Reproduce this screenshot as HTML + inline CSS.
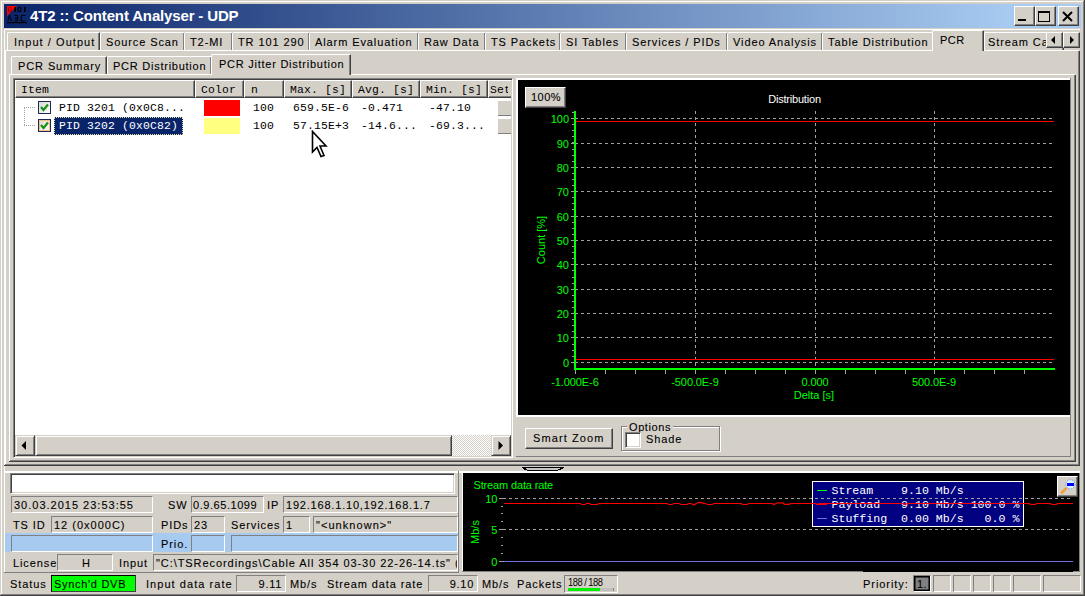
<!DOCTYPE html>
<html><head><meta charset="utf-8">
<style>
*{box-sizing:border-box;margin:0;padding:0}
html,body{width:1085px;height:596px;overflow:hidden;background:#D4D0C8}
body{position:relative;font-family:"Liberation Sans",sans-serif;font-size:11px;color:#000}
.a{position:absolute}
.t{position:absolute;white-space:nowrap;font-size:11px;letter-spacing:0.9px;line-height:13px;-webkit-text-stroke:0.1px #000}
.m{position:absolute;white-space:nowrap;font-family:"Liberation Mono",monospace;font-size:11.4px;line-height:13px;letter-spacing:0.17px}
.c{position:absolute;white-space:nowrap;font-size:11px;line-height:13px;color:#00FF00}
.hl{position:absolute;background:#fff}
.dk{position:absolute;background:#404040}
.sh{position:absolute;background:#808080}
/* raised button */
.sbtn{position:absolute;background:#D4D0C8;border-top:1px solid #D4D0C8;border-left:1px solid #D4D0C8;border-right:1px solid #404040;border-bottom:1px solid #404040;box-shadow:inset 1px 1px 0 #fff, inset -1px -1px 0 #808080}
.btn{position:absolute;background:#D4D0C8;border-top:1px solid #fff;border-left:1px solid #fff;border-right:1px solid #404040;border-bottom:1px solid #404040;box-shadow:inset -1px -1px 0 #808080}
/* thin sunken field */
.fld{position:absolute;border-top:1px solid #808080;border-left:1px solid #808080;border-right:1px solid #fff;border-bottom:1px solid #fff}
/* tabs */
.tab{position:absolute;background:#D4D0C8;border-top:1px solid #fff;border-left:1px solid #fff;border-right:1px solid #404040;box-shadow:inset -1px 0 0 #808080;border-top-left-radius:2px;border-top-right-radius:1px}
</style></head><body>

<!-- window frame -->
<div class="hl" style="left:1px;top:1px;width:1082px;height:1px"></div>
<div class="hl" style="left:1px;top:1px;width:1px;height:593px"></div>
<div class="sh" style="left:1083px;top:1px;width:1px;height:594px"></div>
<div class="sh" style="left:1px;top:594px;width:1083px;height:1px"></div>
<div class="dk" style="left:1084px;top:0;width:1px;height:596px"></div>
<div class="dk" style="left:0;top:595px;width:1085px;height:1px"></div>

<!-- title bar -->
<div class="a" style="left:4px;top:4px;width:1077px;height:24px;background:linear-gradient(to right,#0A246A 0px,#A6CAF0 1005px)"></div>
<svg class="a" style="left:7px;top:6px" width="21" height="18" viewBox="0 0 21 18">
  <polygon points="0,0 10,0 0,10" fill="#f00"/>
  <rect x="1.5" y="1.5" width="3" height="4" rx="1.3" fill="none" stroke="#800" stroke-width="1"/>
  <rect x="7.5" y="1" width="1.5" height="5" fill="#000"/>
  <rect x="11" y="1.5" width="3" height="4" rx="1.3" fill="none" stroke="#000" stroke-width="1.1"/>
  <rect x="17" y="1" width="1.6" height="5" fill="#000"/>
  <path d="M0.8,15 L2.5,9.5 L4.5,15 M7.5,9.5 L10.5,9.5 L11,12 L8,12.3 L11,13 L10.5,15 L7.5,15 M18.5,9.5 L14.5,9.5 L14,15 L18.5,15" stroke="#000" stroke-width="1" fill="none"/>
  <rect x="0" y="16" width="20" height="1.2" fill="#000"/>
</svg>
<div class="a" style="left:30px;top:7px;font-weight:bold;font-size:15px;line-height:17px;color:#fff;letter-spacing:-0.15px;white-space:nowrap">4T2 :: Content Analyser - UDP</div>
<!-- caption buttons -->
<div class="btn" style="left:1014px;top:6px;width:21px;height:20px"><div class="a" style="left:3px;top:12px;width:8px;height:2px;background:#000"></div></div>
<div class="btn" style="left:1035px;top:6px;width:21px;height:20px"><div class="a" style="left:2px;top:4px;width:12px;height:11px;border:1px solid #000;border-top-width:2px"></div></div>
<div class="btn" style="left:1058px;top:6px;width:21px;height:20px">
<svg class="a" style="left:2px;top:3px" width="14" height="13"><path d="M2,2 L11,11 M11,2 L2,11" stroke="#000" stroke-width="2"/></svg></div>

<!-- outer panel lines -->
<div class="hl" style="left:4px;top:29px;width:1076px;height:1px"></div>
<div class="hl" style="left:4px;top:29px;width:1px;height:442px"></div>

<!-- top tabs -->
<div class="tab" style="left:7px;top:32px;width:93px;height:19px"><span class="t" style="left:6px;top:3px;letter-spacing:1.05px">Input / Output</span></div>
<div class="tab" style="left:100px;top:32px;width:85px;height:19px"><span class="t" style="left:5px;top:3px">Source Scan</span></div>
<div class="tab" style="left:184px;top:32px;width:49px;height:19px"><span class="t" style="left:5px;top:3px">T2-MI</span></div>
<div class="tab" style="left:232px;top:32px;width:78px;height:19px"><span class="t" style="left:5px;top:3px">TR 101 290</span></div>
<div class="tab" style="left:309px;top:32px;width:110px;height:19px"><span class="t" style="left:5px;top:3px">Alarm Evaluation</span></div>
<div class="tab" style="left:418px;top:32px;width:68px;height:19px"><span class="t" style="left:5px;top:3px">Raw Data</span></div>
<div class="tab" style="left:485px;top:32px;width:76px;height:19px"><span class="t" style="left:5px;top:3px">TS Packets</span></div>
<div class="tab" style="left:560px;top:32px;width:67px;height:19px"><span class="t" style="left:5px;top:3px">SI Tables</span></div>
<div class="tab" style="left:626px;top:32px;width:102px;height:19px"><span class="t" style="left:5px;top:3px">Services / PIDs</span></div>
<div class="tab" style="left:727px;top:32px;width:96px;height:19px"><span class="t" style="left:5px;top:3px">Video Analysis</span></div>
<div class="tab" style="left:822px;top:32px;width:111px;height:19px"><span class="t" style="left:5px;top:3px">Table Distribution</span></div>
<div class="tab" style="left:984px;top:32px;width:80px;height:19px;overflow:hidden"><span class="t" style="left:3px;top:3px">Stream Capture</span></div>
<!-- page top line -->
<div class="hl" style="left:4px;top:50px;width:1075px;height:1px"></div>
<div class="hl" style="left:5px;top:50px;width:1px;height:415px"></div>
<div class="a" style="left:930px;top:33px;width:2px;height:17px;background:#D4D0C8"></div>
<div class="tab" style="left:932px;top:30px;width:52px;height:21px;border-bottom:none"><span class="t" style="left:7px;top:3px;letter-spacing:0.5px">PCR</span></div>
<!-- tab scroll arrows -->
<div class="btn" style="left:1046px;top:32px;width:17px;height:16px"><svg class="a" style="left:3px;top:3px" width="6" height="9"><polygon points="5,0 5,8 1,4" fill="#000"/></svg></div>
<div class="btn" style="left:1063px;top:32px;width:17px;height:16px"><svg class="a" style="left:5px;top:3px" width="6" height="9"><polygon points="1,0 1,8 5,4" fill="#000"/></svg></div>

<!-- top page right/bottom -->
<div class="sh" style="left:1078px;top:51px;width:1px;height:414px"></div>
<div class="dk" style="left:1079px;top:51px;width:1px;height:415px"></div>
<div class="sh" style="left:5px;top:464px;width:1074px;height:1px"></div>
<div class="dk" style="left:4px;top:465px;width:1076px;height:1px"></div>

<!-- sub tabs -->
<div class="tab" style="left:11px;top:56px;width:96px;height:19px"><span class="t" style="left:6px;top:3px">PCR Summary</span></div>
<div class="tab" style="left:107px;top:56px;width:105px;height:19px"><span class="t" style="left:5px;top:3px;letter-spacing:0.75px">PCR Distribution</span></div>
<div class="hl" style="left:9px;top:74px;width:1066px;height:1px"></div>
<div class="hl" style="left:9px;top:74px;width:1px;height:387px"></div>
<div class="tab" style="left:211px;top:54px;width:140px;height:21px;border-bottom:none"><span class="t" style="left:7px;top:3px;letter-spacing:0.75px">PCR Jitter Distribution</span></div>
<!-- sub page right/bottom -->
<div class="sh" style="left:1074px;top:75px;width:1px;height:385px"></div>
<div class="dk" style="left:1075px;top:75px;width:1px;height:386px"></div>
<div class="sh" style="left:10px;top:460px;width:1065px;height:1px"></div>
<div class="dk" style="left:9px;top:461px;width:1067px;height:1px"></div>

<!-- listview -->
<div class="a" style="left:13px;top:78px;width:500px;height:380px;background:#fff;border-top:1px solid #808080;border-left:1px solid #808080;border-right:1px solid #fff;border-bottom:1px solid #fff;box-shadow:inset 1px 1px 0 #404040, inset -1px -1px 0 #D4D0C8"></div>
<!-- header -->
<div class="a" style="left:15px;top:80px;width:496px;height:18px;overflow:hidden">
 <div class="btn" style="left:0;top:0;width:180px;height:18px"><span class="m" style="left:5px;top:3px">Item</span></div>
 <div class="btn" style="left:180px;top:0;width:49px;height:18px"><span class="m" style="left:5px;top:3px">Color</span></div>
 <div class="btn" style="left:229px;top:0;width:40px;height:18px"><span class="m" style="left:6px;top:3px">n</span></div>
 <div class="btn" style="left:269px;top:0;width:68px;height:18px"><span class="m" style="left:5px;top:3px">Max. [s]</span></div>
 <div class="btn" style="left:337px;top:0;width:68px;height:18px"><span class="m" style="left:5px;top:3px">Avg. [s]</span></div>
 <div class="btn" style="left:405px;top:0;width:68px;height:18px"><span class="m" style="left:5px;top:3px">Min. [s]</span></div>
 <div class="btn" style="left:473px;top:0;width:60px;height:18px"><div class="a" style="left:0;top:0;width:19px;height:16px;overflow:hidden"><span class="m" style="left:1px;top:3px">Set</span></div></div>
</div>
<!-- tree lines -->
<div class="a" style="left:24px;top:107px;width:1px;height:18px;border-left:1px dotted #A0A0A0"></div>
<div class="a" style="left:24px;top:107px;width:11px;height:1px;border-top:1px dotted #A0A0A0"></div>
<div class="a" style="left:24px;top:125px;width:11px;height:1px;border-top:1px dotted #A0A0A0"></div>
<!-- checkboxes -->
<div class="a" style="left:38px;top:101px;width:13px;height:13px;border:1px solid #1c2a5a;background:linear-gradient(135deg,#D8D8D0,#fff)"><svg class="a" style="left:1px;top:1px" width="9" height="9"><path d="M1,4 L3.5,7 L8,1.5" stroke="#189018" stroke-width="2.2" fill="none"/></svg></div>
<div class="a" style="left:38px;top:119px;width:13px;height:13px;border:1px solid #1c2a5a;background:linear-gradient(135deg,#D8D8D0,#fff);box-shadow:inset 0 0 0 1px #F8C080"><svg class="a" style="left:1px;top:1px" width="9" height="9"><path d="M1,4 L3.5,7 L8,1.5" stroke="#189018" stroke-width="2.2" fill="none"/></svg></div>
<!-- row 1 -->
<span class="m" style="left:59px;top:102px">PID 3201 (0x0C8...</span>
<div class="a" style="left:204px;top:100px;width:36px;height:16px;background:#FF0000"></div>
<span class="m" style="left:253px;top:102px">100</span>
<span class="m" style="left:293px;top:102px">659.5E-6</span>
<span class="m" style="left:361px;top:102px">-0.471</span>
<span class="m" style="left:429px;top:102px">-47.10</span>
<div class="a" style="left:498px;top:101px;width:13px;height:15px;background:#D4D0C8;border-bottom:1px solid #808080"></div>
<!-- row 2 -->
<div class="a" style="left:54px;top:117px;width:129px;height:18px;background:#0A246A;border:1px dotted #E8E0A0"></div>
<span class="m" style="left:59px;top:120px;color:#fff">PID 3202 (0x0C82)</span>
<div class="a" style="left:204px;top:118px;width:36px;height:16px;background:#FFFF80"></div>
<span class="m" style="left:253px;top:120px">100</span>
<span class="m" style="left:293px;top:120px">57.15E+3</span>
<span class="m" style="left:361px;top:120px">-14.6...</span>
<span class="m" style="left:429px;top:120px">-69.3...</span>
<div class="a" style="left:498px;top:119px;width:13px;height:15px;background:#D4D0C8;border-bottom:1px solid #808080"></div>
<!-- mouse cursor -->
<svg class="a" style="left:311px;top:130px" width="20" height="30" viewBox="0 0 20 30"><path d="M1.5,1.5 L1.5,22 L6,17.5 L10,26.5 L13,25.5 L9,16 L15,16 Z" fill="#fff" stroke="#000" stroke-width="1.6" stroke-linejoin="miter"/></svg>
<!-- h scrollbar -->
<div class="a" style="left:15px;top:435px;width:496px;height:21px;background:#D4D0C8"></div>
<div class="sbtn" style="left:15px;top:435px;width:20px;height:21px"><svg class="a" style="left:5px;top:5px" width="6" height="10"><polygon points="5,0 5,9 0.5,4.5" fill="#000"/></svg></div>
<div class="sbtn" style="left:35px;top:435px;width:417px;height:21px"></div>
<div class="a" style="left:452px;top:435px;width:39px;height:21px;background-color:#fff;background-image:linear-gradient(45deg,#D4D0C8 25%,transparent 25%,transparent 75%,#D4D0C8 75%),linear-gradient(45deg,#D4D0C8 25%,transparent 25%,transparent 75%,#D4D0C8 75%);background-size:2px 2px;background-position:0 0,1px 1px"></div>
<div class="sbtn" style="left:491px;top:435px;width:20px;height:21px"><svg class="a" style="left:6px;top:5px" width="6" height="10"><polygon points="0.5,0 0.5,9 5,4.5" fill="#000"/></svg></div>
<svg class="a" style="left:518px;top:80px" width="552" height="335" viewBox="0 0 552 335">
<rect width="552" height="335" fill="#000"/>
<line x1="57" y1="282.5" x2="535" y2="282.5" stroke="#A0A0A0" stroke-width="1" stroke-dasharray="3 3"/>
<line x1="53" y1="282.5" x2="56" y2="282.5" stroke="#A0A0A0" stroke-width="1"/>
<text x="51" y="286.5" text-anchor="end" font-family="Liberation Sans" font-size="11" fill="#00FF00">0</text>
<line x1="57" y1="257.5" x2="535" y2="257.5" stroke="#A0A0A0" stroke-width="1" stroke-dasharray="3 3"/>
<line x1="53" y1="257.5" x2="56" y2="257.5" stroke="#A0A0A0" stroke-width="1"/>
<text x="51" y="261.5" text-anchor="end" font-family="Liberation Sans" font-size="11" fill="#00FF00">10</text>
<line x1="57" y1="233.5" x2="535" y2="233.5" stroke="#A0A0A0" stroke-width="1" stroke-dasharray="3 3"/>
<line x1="53" y1="233.5" x2="56" y2="233.5" stroke="#A0A0A0" stroke-width="1"/>
<text x="51" y="237.5" text-anchor="end" font-family="Liberation Sans" font-size="11" fill="#00FF00">20</text>
<line x1="57" y1="209.5" x2="535" y2="209.5" stroke="#A0A0A0" stroke-width="1" stroke-dasharray="3 3"/>
<line x1="53" y1="209.5" x2="56" y2="209.5" stroke="#A0A0A0" stroke-width="1"/>
<text x="51" y="213.5" text-anchor="end" font-family="Liberation Sans" font-size="11" fill="#00FF00">30</text>
<line x1="57" y1="184.5" x2="535" y2="184.5" stroke="#A0A0A0" stroke-width="1" stroke-dasharray="3 3"/>
<line x1="53" y1="184.5" x2="56" y2="184.5" stroke="#A0A0A0" stroke-width="1"/>
<text x="51" y="188.5" text-anchor="end" font-family="Liberation Sans" font-size="11" fill="#00FF00">40</text>
<line x1="57" y1="160.5" x2="535" y2="160.5" stroke="#A0A0A0" stroke-width="1" stroke-dasharray="3 3"/>
<line x1="53" y1="160.5" x2="56" y2="160.5" stroke="#A0A0A0" stroke-width="1"/>
<text x="51" y="164.5" text-anchor="end" font-family="Liberation Sans" font-size="11" fill="#00FF00">50</text>
<line x1="57" y1="136.5" x2="535" y2="136.5" stroke="#A0A0A0" stroke-width="1" stroke-dasharray="3 3"/>
<line x1="53" y1="136.5" x2="56" y2="136.5" stroke="#A0A0A0" stroke-width="1"/>
<text x="51" y="140.5" text-anchor="end" font-family="Liberation Sans" font-size="11" fill="#00FF00">60</text>
<line x1="57" y1="111.5" x2="535" y2="111.5" stroke="#A0A0A0" stroke-width="1" stroke-dasharray="3 3"/>
<line x1="53" y1="111.5" x2="56" y2="111.5" stroke="#A0A0A0" stroke-width="1"/>
<text x="51" y="115.5" text-anchor="end" font-family="Liberation Sans" font-size="11" fill="#00FF00">70</text>
<line x1="57" y1="87.5" x2="535" y2="87.5" stroke="#A0A0A0" stroke-width="1" stroke-dasharray="3 3"/>
<line x1="53" y1="87.5" x2="56" y2="87.5" stroke="#A0A0A0" stroke-width="1"/>
<text x="51" y="91.5" text-anchor="end" font-family="Liberation Sans" font-size="11" fill="#00FF00">80</text>
<line x1="57" y1="63.5" x2="535" y2="63.5" stroke="#A0A0A0" stroke-width="1" stroke-dasharray="3 3"/>
<line x1="53" y1="63.5" x2="56" y2="63.5" stroke="#A0A0A0" stroke-width="1"/>
<text x="51" y="67.5" text-anchor="end" font-family="Liberation Sans" font-size="11" fill="#00FF00">90</text>
<line x1="57" y1="38.5" x2="535" y2="38.5" stroke="#A0A0A0" stroke-width="1" stroke-dasharray="3 3"/>
<line x1="53" y1="38.5" x2="56" y2="38.5" stroke="#A0A0A0" stroke-width="1"/>
<text x="51" y="42.5" text-anchor="end" font-family="Liberation Sans" font-size="11" fill="#00FF00">100</text>
<line x1="54" y1="282.5" x2="56" y2="282.5" stroke="#A0A0A0" stroke-width="1"/>
<line x1="54" y1="276.5" x2="56" y2="276.5" stroke="#A0A0A0" stroke-width="1"/>
<line x1="54" y1="270.5" x2="56" y2="270.5" stroke="#A0A0A0" stroke-width="1"/>
<line x1="54" y1="264.5" x2="56" y2="264.5" stroke="#A0A0A0" stroke-width="1"/>
<line x1="54" y1="257.5" x2="56" y2="257.5" stroke="#A0A0A0" stroke-width="1"/>
<line x1="54" y1="251.5" x2="56" y2="251.5" stroke="#A0A0A0" stroke-width="1"/>
<line x1="54" y1="245.5" x2="56" y2="245.5" stroke="#A0A0A0" stroke-width="1"/>
<line x1="54" y1="239.5" x2="56" y2="239.5" stroke="#A0A0A0" stroke-width="1"/>
<line x1="54" y1="233.5" x2="56" y2="233.5" stroke="#A0A0A0" stroke-width="1"/>
<line x1="54" y1="227.5" x2="56" y2="227.5" stroke="#A0A0A0" stroke-width="1"/>
<line x1="54" y1="221.5" x2="56" y2="221.5" stroke="#A0A0A0" stroke-width="1"/>
<line x1="54" y1="215.5" x2="56" y2="215.5" stroke="#A0A0A0" stroke-width="1"/>
<line x1="54" y1="209.5" x2="56" y2="209.5" stroke="#A0A0A0" stroke-width="1"/>
<line x1="54" y1="203.5" x2="56" y2="203.5" stroke="#A0A0A0" stroke-width="1"/>
<line x1="54" y1="197.5" x2="56" y2="197.5" stroke="#A0A0A0" stroke-width="1"/>
<line x1="54" y1="190.5" x2="56" y2="190.5" stroke="#A0A0A0" stroke-width="1"/>
<line x1="54" y1="184.5" x2="56" y2="184.5" stroke="#A0A0A0" stroke-width="1"/>
<line x1="54" y1="178.5" x2="56" y2="178.5" stroke="#A0A0A0" stroke-width="1"/>
<line x1="54" y1="172.5" x2="56" y2="172.5" stroke="#A0A0A0" stroke-width="1"/>
<line x1="54" y1="166.5" x2="56" y2="166.5" stroke="#A0A0A0" stroke-width="1"/>
<line x1="54" y1="160.5" x2="56" y2="160.5" stroke="#A0A0A0" stroke-width="1"/>
<line x1="54" y1="154.5" x2="56" y2="154.5" stroke="#A0A0A0" stroke-width="1"/>
<line x1="54" y1="148.5" x2="56" y2="148.5" stroke="#A0A0A0" stroke-width="1"/>
<line x1="54" y1="142.5" x2="56" y2="142.5" stroke="#A0A0A0" stroke-width="1"/>
<line x1="54" y1="136.5" x2="56" y2="136.5" stroke="#A0A0A0" stroke-width="1"/>
<line x1="54" y1="129.5" x2="56" y2="129.5" stroke="#A0A0A0" stroke-width="1"/>
<line x1="54" y1="123.5" x2="56" y2="123.5" stroke="#A0A0A0" stroke-width="1"/>
<line x1="54" y1="117.5" x2="56" y2="117.5" stroke="#A0A0A0" stroke-width="1"/>
<line x1="54" y1="111.5" x2="56" y2="111.5" stroke="#A0A0A0" stroke-width="1"/>
<line x1="54" y1="105.5" x2="56" y2="105.5" stroke="#A0A0A0" stroke-width="1"/>
<line x1="54" y1="99.5" x2="56" y2="99.5" stroke="#A0A0A0" stroke-width="1"/>
<line x1="54" y1="93.5" x2="56" y2="93.5" stroke="#A0A0A0" stroke-width="1"/>
<line x1="54" y1="87.5" x2="56" y2="87.5" stroke="#A0A0A0" stroke-width="1"/>
<line x1="54" y1="81.5" x2="56" y2="81.5" stroke="#A0A0A0" stroke-width="1"/>
<line x1="54" y1="75.5" x2="56" y2="75.5" stroke="#A0A0A0" stroke-width="1"/>
<line x1="54" y1="69.5" x2="56" y2="69.5" stroke="#A0A0A0" stroke-width="1"/>
<line x1="54" y1="62.5" x2="56" y2="62.5" stroke="#A0A0A0" stroke-width="1"/>
<line x1="54" y1="56.5" x2="56" y2="56.5" stroke="#A0A0A0" stroke-width="1"/>
<line x1="54" y1="50.5" x2="56" y2="50.5" stroke="#A0A0A0" stroke-width="1"/>
<line x1="54" y1="44.5" x2="56" y2="44.5" stroke="#A0A0A0" stroke-width="1"/>
<line x1="54" y1="38.5" x2="56" y2="38.5" stroke="#A0A0A0" stroke-width="1"/>
<line x1="54" y1="32.5" x2="56" y2="32.5" stroke="#A0A0A0" stroke-width="1"/>
<line x1="177.5" y1="31" x2="177.5" y2="288" stroke="#A0A0A0" stroke-width="1" stroke-dasharray="3 3"/>
<line x1="297.5" y1="31" x2="297.5" y2="288" stroke="#A0A0A0" stroke-width="1" stroke-dasharray="3 3"/>
<line x1="416.5" y1="31" x2="416.5" y2="288" stroke="#A0A0A0" stroke-width="1" stroke-dasharray="3 3"/>
<line x1="57.5" y1="290" x2="57.5" y2="294" stroke="#A0A0A0" stroke-width="1"/>
<line x1="87.5" y1="290" x2="87.5" y2="294" stroke="#A0A0A0" stroke-width="1"/>
<line x1="117.5" y1="290" x2="117.5" y2="294" stroke="#A0A0A0" stroke-width="1"/>
<line x1="147.5" y1="290" x2="147.5" y2="294" stroke="#A0A0A0" stroke-width="1"/>
<line x1="177.5" y1="290" x2="177.5" y2="294" stroke="#A0A0A0" stroke-width="1"/>
<line x1="207.5" y1="290" x2="207.5" y2="294" stroke="#A0A0A0" stroke-width="1"/>
<line x1="237.5" y1="290" x2="237.5" y2="294" stroke="#A0A0A0" stroke-width="1"/>
<line x1="267.5" y1="290" x2="267.5" y2="294" stroke="#A0A0A0" stroke-width="1"/>
<line x1="297.5" y1="290" x2="297.5" y2="294" stroke="#A0A0A0" stroke-width="1"/>
<line x1="327.5" y1="290" x2="327.5" y2="294" stroke="#A0A0A0" stroke-width="1"/>
<line x1="357.5" y1="290" x2="357.5" y2="294" stroke="#A0A0A0" stroke-width="1"/>
<line x1="387.5" y1="290" x2="387.5" y2="294" stroke="#A0A0A0" stroke-width="1"/>
<line x1="416.5" y1="290" x2="416.5" y2="294" stroke="#A0A0A0" stroke-width="1"/>
<line x1="446.5" y1="290" x2="446.5" y2="294" stroke="#A0A0A0" stroke-width="1"/>
<line x1="476.5" y1="290" x2="476.5" y2="294" stroke="#A0A0A0" stroke-width="1"/>
<line x1="506.5" y1="290" x2="506.5" y2="294" stroke="#A0A0A0" stroke-width="1"/>
<text x="57" y="306" text-anchor="middle" font-family="Liberation Sans" font-size="11" fill="#00FF00" letter-spacing="-0.1">-1.000E-6</text>
<text x="177" y="306" text-anchor="middle" font-family="Liberation Sans" font-size="11" fill="#00FF00" letter-spacing="-0.1">-500.0E-9</text>
<text x="297" y="306" text-anchor="middle" font-family="Liberation Sans" font-size="11" fill="#00FF00" letter-spacing="-0.1">0.000</text>
<text x="416" y="306" text-anchor="middle" font-family="Liberation Sans" font-size="11" fill="#00FF00" letter-spacing="-0.1">500.0E-9</text>
<text x="296" y="319" text-anchor="middle" font-family="Liberation Sans" font-size="11" fill="#00FF00">Delta [s]</text>
<text x="0" y="0" transform="translate(27,160) rotate(-90)" text-anchor="middle" font-family="Liberation Sans" font-size="11" fill="#00FF00">Count [%]</text>
<text x="276.5" y="23" text-anchor="middle" font-family="Liberation Sans" font-size="11" fill="#fff" letter-spacing="-0.2">Distribution</text>
<line x1="58" y1="41.5" x2="536" y2="41.5" stroke="#FF0000" stroke-width="1.1"/>
<line x1="58" y1="279.5" x2="536" y2="279.5" stroke="#FF0000" stroke-width="1.1"/>
<rect x="56" y="31" width="2" height="259" fill="#00FF00"/>
<rect x="56" y="288" width="481" height="2" fill="#00FF00"/>
</svg>
<div class="hl" style="left:4px;top:471px;width:1076px;height:2px"></div>
<div class="hl" style="left:462px;top:471px;width:1px;height:100px"></div>
<div class="sh" style="left:1079px;top:473px;width:1px;height:99px"></div>
<div class="sh" style="left:462px;top:571px;width:618px;height:1px"></div><div class="a" style="left:863px;top:571px;width:210px;height:1px;background:#000"></div>
<svg class="a" style="left:463px;top:473px" width="616" height="98" viewBox="0 0 616 98">
<rect width="616" height="98" fill="#000"/>
<text x="10.5" y="16" font-family="Liberation Sans" font-size="11" fill="#00FF00" letter-spacing="-0.15">Stream data rate</text>
<line x1="40" y1="25.5" x2="609" y2="25.5" stroke="#A0A0A0" stroke-width="1" stroke-dasharray="3 3"/>
<line x1="36" y1="25.5" x2="42" y2="25.5" stroke="#A0A0A0" stroke-width="1"/>
<text x="34" y="29.5" text-anchor="end" font-family="Liberation Sans" font-size="11" fill="#00FF00" letter-spacing="-0.3">10</text>
<line x1="40" y1="56.5" x2="609" y2="56.5" stroke="#A0A0A0" stroke-width="1" stroke-dasharray="3 3"/>
<line x1="36" y1="56.5" x2="42" y2="56.5" stroke="#A0A0A0" stroke-width="1"/>
<text x="34" y="60.5" text-anchor="end" font-family="Liberation Sans" font-size="11" fill="#00FF00" letter-spacing="-0.3">5</text>
<line x1="36" y1="88.5" x2="42" y2="88.5" stroke="#A0A0A0" stroke-width="1"/>
<text x="34" y="92.5" text-anchor="end" font-family="Liberation Sans" font-size="11" fill="#00FF00" letter-spacing="-0.3">0</text>
<line x1="38" y1="33.5" x2="40" y2="33.5" stroke="#A0A0A0" stroke-width="1"/>
<line x1="38" y1="40.5" x2="40" y2="40.5" stroke="#A0A0A0" stroke-width="1"/>
<line x1="38" y1="48.5" x2="40" y2="48.5" stroke="#A0A0A0" stroke-width="1"/>
<line x1="38" y1="64.5" x2="40" y2="64.5" stroke="#A0A0A0" stroke-width="1"/>
<line x1="38" y1="72.5" x2="40" y2="72.5" stroke="#A0A0A0" stroke-width="1"/>
<line x1="38" y1="80.5" x2="40" y2="80.5" stroke="#A0A0A0" stroke-width="1"/>
<text x="0" y="0" transform="translate(16,59) rotate(-90)" text-anchor="middle" font-family="Liberation Sans" font-size="11" fill="#00FF00">Mb/s</text>
<line x1="41" y1="88.5" x2="610" y2="88.5" stroke="#7070E0" stroke-width="1"/>
<rect x="349.5" y="8.5" width="211" height="45" fill="#000080" stroke="#fff" stroke-width="1"/>
<line x1="354" y1="17.5" x2="364" y2="17.5" stroke="#00FF00"/>
<line x1="354" y1="31.5" x2="364" y2="31.5" stroke="#FF0000"/>
<line x1="354" y1="45.5" x2="364" y2="45.5" stroke="#7070E0"/>
<text font-family="Liberation Mono" font-size="11.6" fill="#fff" xml:space="preserve"><tspan x="368.5" y="21">Stream    9.10 Mb/s</tspan><tspan x="368.5" y="35">Payload   9.10 Mb/s 100.0 %</tspan><tspan x="368.5" y="49">Stuffing  0.00 Mb/s   0.0 %</tspan></text>
<line x1="40" y1="25.5" x2="609" y2="25.5" stroke="#A0A0A0" stroke-width="1" stroke-dasharray="3 3"/>
<polyline points="41,30.5 117,30.5 119,31.5 122,31.5 124,30.30000000000001 126,30.30000000000001 128,31.5 134,31.5 136,30.5 204,30.5 206,31.5 209,31.5 211,30.5 216,30.5 218,31.5 224,31.5 226,30.5 228,30.5 231,32 234,30 237,29.30000000000001 241,30.30000000000001 245,31.5 249,31.5 251,30.5 278,30.5 280,31.5 284,31.5 286,30.5 309,30.5 311,31.5 314,30 319,29.80000000000001 322,31.30000000000001 326,31.30000000000001 328,30.5 352,30.5 354,31.30000000000001 357,30.5 440,30.5 442,31.30000000000001 445,30.5 566,30.5 568,31.5 572,31.5 574,30.5 587,30.5 589,31.5 593,31.5 595,30.5 610,30.5" fill="none" stroke="#FF0000" stroke-width="1.2"/>
</svg>
<!-- chart panel frame -->
<div class="hl" style="left:516px;top:78px;width:555px;height:2px"></div>
<div class="hl" style="left:516px;top:78px;width:2px;height:339px"></div>
<div class="hl" style="left:516px;top:415px;width:554px;height:2px"></div>
<div class="sh" style="left:1070px;top:78px;width:1px;height:379px"></div>
<div class="sh" style="left:516px;top:456px;width:555px;height:1px"></div>
<!-- 100% button -->
<div class="btn" style="left:525px;top:87px;width:41px;height:21px;z-index:2"><span class="t" style="left:5px;top:3px;letter-spacing:0.5px">100%</span></div>
<!-- smart zoom -->
<div class="btn" style="left:525px;top:428px;width:88px;height:21px"><span class="t" style="left:7px;top:3px;letter-spacing:1.1px">Smart Zoom</span></div>
<!-- options groupbox -->
<div class="a" style="left:621px;top:426px;width:99px;height:25px;border:1px solid #808080;box-shadow:1px 1px 0 #fff, inset 1px 1px 0 #fff"></div>
<div class="a" style="left:627px;top:421px;width:46px;height:12px;background:#D4D0C8"></div>
<span class="t" style="left:629px;top:421px;letter-spacing:0.6px">Options</span>
<div class="a" style="left:625px;top:432px;width:16px;height:16px;background:#fff;border-top:1px solid #808080;border-left:1px solid #808080;border-right:1px solid #fff;border-bottom:1px solid #fff;box-shadow:inset 1px 1px 0 #404040, inset -1px -1px 0 #D4D0C8"></div>
<span class="t" style="left:646px;top:433px">Shade</span>

<!-- bottom panel -->
<div class="hl" style="left:4px;top:471px;width:455px;height:1px"></div>
<div class="hl" style="left:4px;top:471px;width:1px;height:101px"></div>
<div class="sh" style="left:4px;top:572px;width:455px;height:1px"></div>
<div class="sh" style="left:458px;top:471px;width:1px;height:101px"></div>
<!-- splitter grip -->
<svg class="a" style="left:520px;top:466px" width="46" height="6" shape-rendering="crispEdges"><rect x="2" y="1" width="42" height="1" fill="#000"/><rect x="3" y="2" width="3" height="1" fill="#000"/><rect x="6" y="2" width="34" height="1" fill="#C8C8C8"/><rect x="40" y="2" width="3" height="1" fill="#000"/><rect x="4" y="3" width="3" height="1" fill="#000"/><rect x="7" y="3" width="31" height="1" fill="#C8C8C8"/><rect x="38" y="3" width="3" height="1" fill="#000"/><rect x="7" y="4" width="31" height="1" fill="#000"/></svg>
<!-- textbox -->
<div class="a" style="left:10px;top:473px;width:445px;height:21px;background:#fff;border-top:1px solid #808080;border-left:1px solid #808080;border-right:1px solid #fff;border-bottom:1px solid #fff;box-shadow:inset 1px 1px 0 #404040, inset -1px -1px 0 #D4D0C8"></div>
<!-- row1 -->
<div class="fld" style="left:11px;top:496px;width:142px;height:17px"><span class="t" style="left:2px;top:2px;letter-spacing:1.0px">30.03.2015 23:53:55</span></div>
<span class="t" style="left:168px;top:499px">SW</span>
<div class="fld" style="left:191px;top:496px;width:73px;height:17px"><span class="t" style="left:1px;top:2px;letter-spacing:0.55px">0.9.65.1099</span></div>
<span class="t" style="left:267px;top:499px">IP</span>
<div class="fld" style="left:283px;top:496px;width:175px;height:17px"><span class="t" style="left:2px;top:2px;letter-spacing:0.8px">192.168.1.10,192.168.1.7</span></div>
<!-- row2 -->
<span class="t" style="left:13px;top:519px">TS ID</span>
<div class="fld" style="left:51px;top:516px;width:102px;height:17px"><span class="t" style="left:2px;top:2px;letter-spacing:1.0px">12 (0x000C)</span></div>
<span class="t" style="left:161px;top:519px">PIDs</span>
<div class="fld" style="left:191px;top:516px;width:34px;height:17px"><span class="t" style="left:2px;top:2px">23</span></div>
<span class="t" style="left:231px;top:519px">Services</span>
<div class="fld" style="left:283px;top:516px;width:27px;height:17px"><span class="t" style="left:2px;top:2px">1</span></div>
<div class="fld" style="left:313px;top:516px;width:145px;height:17px"><span class="t" style="left:2px;top:2px;letter-spacing:1.05px">"&lt;unknown&gt;"</span></div>
<!-- row3 blue -->
<div class="a" style="left:5px;top:533px;width:453px;height:19px;background:#A6CAF0"></div>
<div class="fld" style="left:11px;top:535px;width:142px;height:17px"></div>
<span class="t" style="left:161px;top:538px">Prio.</span>
<div class="fld" style="left:191px;top:535px;width:34px;height:17px"></div>
<div class="fld" style="left:231px;top:535px;width:227px;height:17px"></div>
<!-- row4 -->
<span class="t" style="left:13px;top:557px">License</span>
<div class="fld" style="left:57px;top:554px;width:56px;height:17px"><span class="t" style="left:24px;top:2px">H</span></div>
<span class="t" style="left:119px;top:557px">Input</span>
<div class="fld" style="left:153px;top:554px;width:305px;height:17px;overflow:hidden"><span class="t" style="left:2px;top:2px;letter-spacing:0.93px">"C:\TSRecordings\Cable All 354 03-30 22-26-14.ts" (</span></div>

<!-- status bar -->
<span class="t" style="left:10px;top:578px">Status</span>
<div class="a" style="left:51px;top:575px;width:85px;height:17px;background:#00FF00;border:1px solid #000;border-right-color:#404040;border-bottom-color:#404040"><span class="t" style="left:2px;top:2px;letter-spacing:0.7px">Synch'd DVB</span></div>
<span class="t" style="left:146px;top:578px;letter-spacing:1.05px">Input data rate</span>
<div class="fld" style="left:236px;top:575px;width:50px;height:17px"><span class="t" style="left:auto;right:3px;top:2px;letter-spacing:0.7px">9.11</span></div>
<span class="t" style="left:290px;top:578px">Mb/s</span>
<span class="t" style="left:327px;top:578px">Stream data rate</span>
<div class="fld" style="left:428px;top:575px;width:50px;height:17px"><span class="t" style="left:auto;right:3px;top:2px;letter-spacing:0.7px">9.10</span></div>
<span class="t" style="left:482px;top:578px">Mb/s</span>
<span class="t" style="left:517px;top:578px">Packets</span>
<div class="fld" style="left:564px;top:575px;width:54px;height:18px">
 <span class="a" style="left:3px;top:0px;font-size:11px;line-height:12px;letter-spacing:-0.6px;white-space:nowrap;transform:scaleX(0.85);transform-origin:left">188 / 188</span>
 <div class="a" style="left:3px;top:12px;width:32px;height:3px;background:#00F000"></div>
 <div class="a" style="left:35px;top:12px;width:14px;height:3px;background:#C0C0C0;border-right:1px solid #808080"></div>
</div>
<span class="t" style="left:863px;top:578px;letter-spacing:0.95px">Priority:</span>
<div class="fld" style="left:913px;top:575px;width:18px;height:17px"><div class="a" style="left:0;top:0;width:16px;height:15px;background:#808080;border:1px solid #000;box-shadow:inset 0 0 0 0.5px #000"><span class="t" style="left:2px;top:1px;letter-spacing:0.3px">1.</span></div></div>
<div class="fld" style="left:933px;top:575px;width:18px;height:17px"></div>
<div class="fld" style="left:953px;top:575px;width:18px;height:17px"></div>
<div class="fld" style="left:973px;top:575px;width:18px;height:17px"></div>
<div class="fld" style="left:993px;top:575px;width:18px;height:17px"></div>
<div class="fld" style="left:1013px;top:575px;width:28px;height:17px"></div>
<div class="fld" style="left:1043px;top:575px;width:38px;height:17px"></div>

<!-- zoom icon button on small chart -->
<div class="btn" style="left:1057px;top:476px;width:21px;height:21px;z-index:3">
<svg class="a" style="left:1px;top:1px" width="17" height="17" viewBox="0 0 17 17"><line x1="2" y1="15.5" x2="7.5" y2="10" stroke="#F0A040" stroke-width="2.6"/><circle cx="11.4" cy="6.3" r="4.6" fill="#D8F6FF" stroke="#8098E8" stroke-width="1" stroke-dasharray="1.5 1"/><rect x="8" y="5" width="7" height="3" fill="#0000FF"/></svg>
</div>

<div id="content"></div>
</body></html>
